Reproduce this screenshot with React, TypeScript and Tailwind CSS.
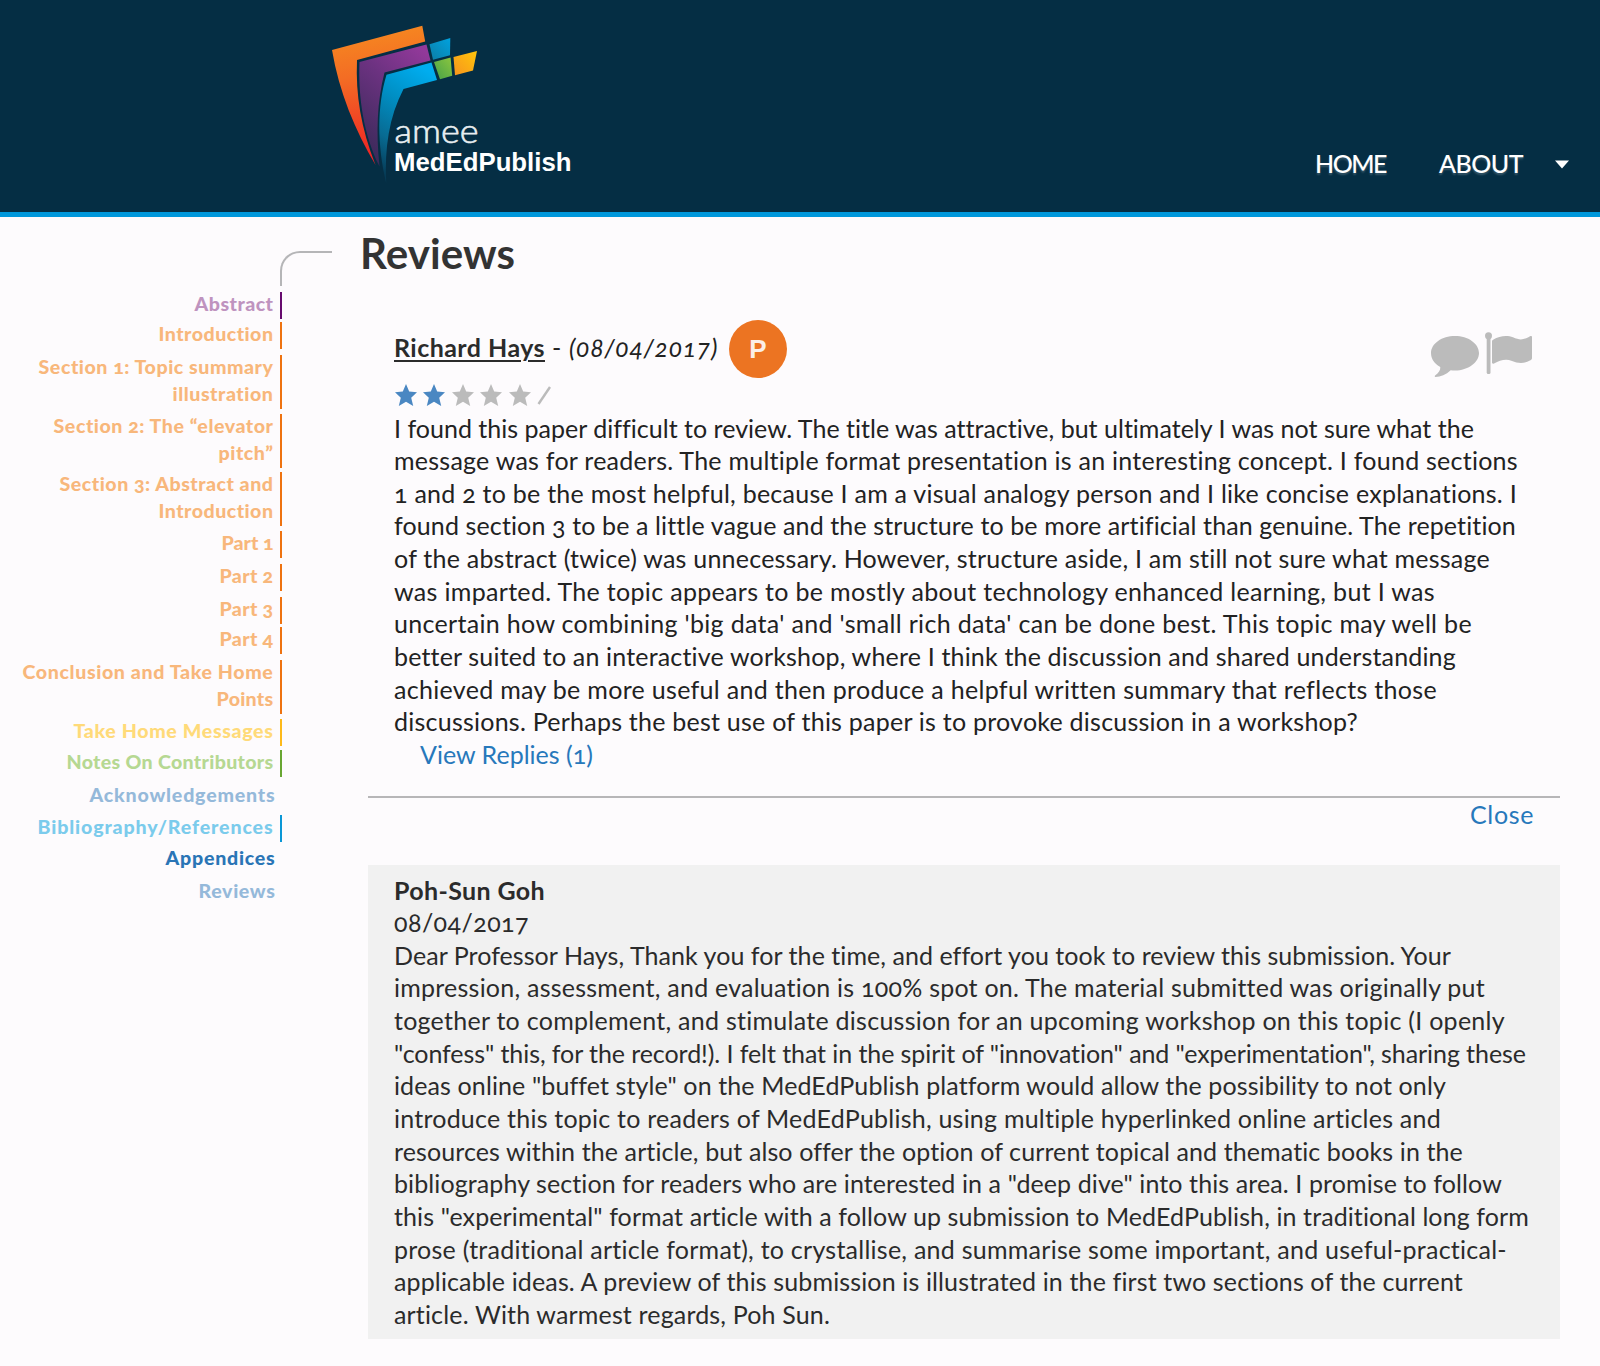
import { useLayoutEffect, useRef, useState } from 'react';

interface Line {
  text: string;
  width: number;
}

interface NavItem {
  lines: Line[];
  text: string;
  bar?: string;
  gap: string;
}

const orange = { text: 'text-[#f8b77b]', bar: 'border-[#ee7210]' };

const navItems: NavItem[] = [
  { lines: [{ text: 'Abstract', width: 79 }], text: 'text-[#bf93bf]', bar: 'border-[#660a6e]', gap: 'mt-0' },
  { lines: [{ text: 'Introduction', width: 115 }], ...orange, gap: 'mt-[3px]' },
  { lines: [{ text: 'Section 1: Topic summary', width: 235 }, { text: 'illustration', width: 101 }], ...orange, gap: 'mt-[6px]' },
  { lines: [{ text: 'Section 2: The “elevator', width: 220 }, { text: 'pitch”', width: 55 }], ...orange, gap: 'mt-[5px]' },
  { lines: [{ text: 'Section 3: Abstract and', width: 214 }, { text: 'Introduction', width: 115 }], ...orange, gap: 'mt-[4px]' },
  { lines: [{ text: 'Part 1', width: 52 }], ...orange, gap: 'mt-[5px]' },
  { lines: [{ text: 'Part 2', width: 54 }], ...orange, gap: 'mt-[6px]' },
  { lines: [{ text: 'Part 3', width: 54 }], ...orange, gap: 'mt-[6px]' },
  { lines: [{ text: 'Part 4', width: 54 }], ...orange, gap: 'mt-[3px]' },
  { lines: [{ text: 'Conclusion and Take Home', width: 251 }, { text: 'Points', width: 57 }], ...orange, gap: 'mt-[6px]' },
  { lines: [{ text: 'Take Home Messages', width: 200 }], text: 'text-[#ffda79]', bar: 'border-[#fdb91a]', gap: 'mt-[5px]' },
  { lines: [{ text: 'Notes On Contributors', width: 207 }], text: 'text-[#b6d892]', bar: 'border-[#68a632]', gap: 'mt-[4px]' },
  { lines: [{ text: 'Acknowledgements', width: 186 }], text: 'text-[#95b9da]', gap: 'mt-[6px]' },
  { lines: [{ text: 'Bibliography/References', width: 236 }], text: 'text-[#7bcbec]', bar: 'border-[#0a97d6]', gap: 'mt-[5px]' },
  { lines: [{ text: 'Appendices', width: 110 }], text: 'text-[#2a75b6]', gap: 'mt-[4px]' },
  { lines: [{ text: 'Reviews', width: 77 }], text: 'text-[#95b9da]', gap: 'mt-[6px]' },
];

const reviewLines: Line[] = [
  { text: 'I found this paper difficult to review. The title was attractive, but ultimately I was not sure what the', width: 1080 },
  { text: 'message was for readers. The multiple format presentation is an interesting concept. I found sections', width: 1124 },
  { text: '1 and 2 to be the most helpful, because I am a visual analogy person and I like concise explanations. I', width: 1123 },
  { text: 'found section 3 to be a little vague and the structure to be more artificial than genuine. The repetition', width: 1122 },
  { text: 'of the abstract (twice) was unnecessary. However, structure aside, I am still not sure what message', width: 1096 },
  { text: 'was imparted. The topic appears to be mostly about technology enhanced learning, but I was', width: 1041 },
  { text: "uncertain how combining 'big data' and 'small rich data' can be done best. This topic may well be", width: 1078 },
  { text: 'better suited to an interactive workshop, where I think the discussion and shared understanding', width: 1062 },
  { text: 'achieved may be more useful and then produce a helpful written summary that reflects those', width: 1043 },
  { text: 'discussions. Perhaps the best use of this paper is to provoke discussion in a workshop?', width: 964 },
];

const replyLines: Line[] = [
  { text: 'Dear Professor Hays, Thank you for the time, and effort you took to review this submission. Your', width: 1057 },
  { text: 'impression, assessment, and evaluation is 100% spot on. The material submitted was originally put', width: 1091 },
  { text: 'together to complement, and stimulate discussion for an upcoming workshop on this topic (I openly', width: 1111 },
  { text: '"confess" this, for the record!). I felt that in the spirit of "innovation" and "experimentation", sharing these', width: 1132 },
  { text: 'ideas online "buffet style" on the MedEdPublish platform would allow the possibility to not only', width: 1052 },
  { text: 'introduce this topic to readers of MedEdPublish, using multiple hyperlinked online articles and', width: 1047 },
  { text: 'resources within the article, but also offer the option of current topical and thematic books in the', width: 1069 },
  { text: 'bibliography section for readers who are interested in a "deep dive" into this area. I promise to follow', width: 1108 },
  { text: 'this "experimental" format article with a follow up submission to MedEdPublish, in traditional long form', width: 1135 },
  { text: 'prose (traditional article format), to crystallise, and summarise some important, and useful-practical-', width: 1113 },
  { text: 'applicable ideas. A preview of this submission is illustrated in the first two sections of the current', width: 1069 },
  { text: 'article. With warmest regards, Poh Sun.', width: 436 },
];

// Tracks a run of text out (or in) so that it fills the given measure
function Fit({ text, width, className = '' }: Line & { className?: string }) {
  const ref = useRef<HTMLSpanElement>(null);
  const [spacing, setSpacing] = useState(0);

  useLayoutEffect(() => {
    if (!ref.current) return;
    ref.current.style.letterSpacing = '0.001px';
    const natural = ref.current.getBoundingClientRect().width;
    setSpacing((width - natural) / text.length);
  }, [text, width]);

  return (
    <span ref={ref} className={`inline-block whitespace-nowrap ${className}`} style={{ letterSpacing: `${spacing}px` }}>
      {text}
    </span>
  );
}

function Paragraph({ lines }: { lines: Line[] }) {
  return (
    <p>
      {lines.map((line) => (
        <span key={line.text} className="block">
          <Fit {...line} />
        </span>
      ))}
    </p>
  );
}

function Logo() {
  return (
    <svg width="280" height="170" viewBox="310 20 280 170" className="block">
      <defs>
        <linearGradient id="orange" x1="0.4" y1="0" x2="0.5" y2="1">
          <stop offset="0" stopColor="#f68a20" />
          <stop offset="0.35" stopColor="#f36c24" />
          <stop offset="1" stopColor="#ee1c25" />
        </linearGradient>
        <linearGradient id="purple" x1="0.8" y1="0" x2="0.3" y2="1">
          <stop offset="0" stopColor="#92399a" />
          <stop offset="0.4" stopColor="#6b3280" />
          <stop offset="1" stopColor="#3a2a59" />
        </linearGradient>
        <linearGradient id="blue" x1="0.6" y1="0" x2="0.3" y2="1">
          <stop offset="0" stopColor="#00adef" />
          <stop offset="0.35" stopColor="#008fc4" />
          <stop offset="0.7" stopColor="#086b93" />
          <stop offset="1" stopColor="#063a55" />
        </linearGradient>
        <linearGradient id="teal" x1="1" y1="0" x2="0" y2="1">
          <stop offset="0" stopColor="#00a2df" />
          <stop offset="1" stopColor="#0c7da6" />
        </linearGradient>
        <linearGradient id="green" x1="1" y1="0" x2="0" y2="1">
          <stop offset="0" stopColor="#8cc63f" />
          <stop offset="1" stopColor="#45a148" />
        </linearGradient>
        <linearGradient id="yellow" x1="1" y1="0" x2="0" y2="1">
          <stop offset="0" stopColor="#ffc60b" />
          <stop offset="1" stopColor="#f7941e" />
        </linearGradient>
      </defs>
      <path d="M332 50L422.3 25.8L425.2 41.5L357 60C355.5 95 361 128 375.5 165C355 130 339 92 332 50Z" fill="url(#orange)" />
      <path d="M359.5 62L426.5 44.5L430.5 60.5L384.5 72.5C377 102 376 132 379.5 166.500C364 136 358 98 359.500 62Z" fill="url(#purple)" />
      <path d="M386.500 74.800L431.500 62.500L437 80L403.500 89C389 117 384.500 148 386.200 183C377 145 377 106 386.500 74.800Z" fill="url(#blue)" />
      <path d="M429.500 44.200L450.300 38L450 55.200L433 59.800Z" fill="url(#teal)" />
      <path d="M434 62L450.600 57.500L452.200 75.700L440 79.300Z" fill="url(#green)" />
      <path d="M453.500 57L477 51L473 70.500L455 75.300Z" fill="url(#yellow)" />
      <text x="394.500" y="143" textLength="84" lengthAdjust="spacingAndGlyphs" fill="#e9eef1" stroke="#e9eef1" strokeWidth="0.600" className="font-['Lato',sans-serif] text-[33px] font-light">amee</text>
      <text x="394" y="170.700" textLength="177.500" lengthAdjust="spacingAndGlyphs" fill="#ffffff" className="font-['Liberation_Sans',Arial,sans-serif] text-[26px] font-bold">MedEdPublish</text>
    </svg>
  );
}

function Star({ filled }: { filled: boolean }) {
  return (
    <svg width="22" height="22" viewBox="0 0 22 22" className={filled ? 'text-[#4a87c2]' : 'text-[#bbbbbb]'}>
      <path d="M11 0L14.200 7.500L22 8.300L16.200 13.700L18.200 22L11 17.800L3.800 22L5.800 13.700L0 8.300L7.800 7.500Z" fill="currentColor" />
    </svg>
  );
}

function Header() {
  return (
    <header className="flex h-[217px] items-start justify-between border-b-[5px] border-[#0098dc] bg-[#052e44] pl-[310px] pr-[31px]">
      <div className="pt-5">
        <Logo />
      </div>
      <nav className="flex items-center pt-[146px] text-[25px] leading-[34px] font-medium text-white [text-shadow:0_2px_2px_rgba(255,255,255,0.2)]">
        <a className="w-[124px]">
          <Fit text="HOME" width={71} />
        </a>
        <a className="w-[116px]">
          <Fit text="ABOUT" width={84} />
        </a>
        <svg width="14" height="9" viewBox="0 0 14 9" className="mt-[2px] block">
          <path d="M0 0.500H14L7 8.500Z" fill="#ffffff" />
        </svg>
      </nav>
    </header>
  );
}

function Sidebar() {
  return (
    <aside className="w-[332px] shrink-0 pt-[34px]">
      <div className="ml-[280px] h-[35px] rounded-tl-[20px] border-t-2 border-l-2 border-[#b5b5b7]" />
      <ul className="w-[282px] pt-[6px] text-[19.600px] leading-[27px] font-black">
        {navItems.map((item, i) => (
          <li key={i} className={`flex flex-col items-end ${item.text} ${item.gap} ${item.bar ? `border-r-2 pr-[6.500px] ${item.bar}` : 'pr-[6.500px]'}`}>
            {item.lines.map((line) => (
              <Fit key={line.text} {...line} className="-mt-[2px] mb-[2px]" />
            ))}
          </li>
        ))}
      </ul>
    </aside>
  );
}

function Review() {
  return (
    <article className="px-[26px]">
      <div className="flex h-[58px] items-center">
        <Fit text="Richard Hays" width={151} className="-mt-[3px] font-bold underline decoration-2 underline-offset-[3px] text-[#2b2b2b]" />
        <span className="-mt-[3px] ml-[7px] w-[17px]">-</span>
        <Fit text="(08/04/2017)" width={149} className="-mt-[3px] italic" />
        <span className="ml-[11px] flex size-[58px] items-center justify-center rounded-full bg-[#ec7422] font-['Liberation_Sans',Arial,sans-serif] text-[26px] font-bold text-[#fbeee6]">
          P
        </span>
        <svg width="104" height="46" viewBox="0 0 104 46" className="ml-auto mt-[11px] text-[#bbbbbb]" fill="currentColor">
          <path d="M25 4C38 4 49 11.500 49 21S38 38.500 25 38.500C23.500 38.500 22 38.400 20.700 38.200C16 42.500 10.500 45 5.500 45C4.500 45 4.500 43.800 5.400 43.200C8.500 41 10.500 38.500 10.300 35C4.500 32 1 26.800 1 21C1 11.500 12 4 25 4Z" />
          <circle cx="58.500" cy="3.800" r="3.500" />
          <rect x="56.700" y="4" width="3.800" height="38" rx="1.500" />
          <path d="M62 9.500C62 8.500 62.500 8 63.500 7.500C69 4 77 2.800 83 5.300C90 8.500 93.500 8 100 4.200C101.200 3.500 102 4 102 5.200V26C102 27.200 101.500 27.700 100.500 28.300C94 32 88 31.500 82 29C75.500 26.500 70 28.500 64 31.500C62.700 32 62 31.500 62 30.500Z" />
        </svg>
      </div>
      <div className="mt-1 mb-[3px] ml-[0.500px] flex h-[26.500px] items-center gap-[6.500px]">
        {[1, 2, 3, 4, 5].map((n) => (
          <Star key={n} filled={n <= 2} />
        ))}
        <svg width="14" height="19" viewBox="0 0 14 19">
          <path d="M1.500 18L13 1" stroke="#bbbbbb" strokeWidth="2.400" />
        </svg>
      </div>
      <Paragraph lines={reviewLines} />
      <a className="ml-[26px] block text-[#2778bb]">
        <Fit text="View Replies (1)" width={173} />
      </a>
    </article>
  );
}

export default function App() {
  return (
    <div className="min-h-[1366px] w-[1600px] overflow-hidden bg-[#fdfbfd] font-['Lato',sans-serif] text-[#222222] oldstyle-nums">
      <Header />
      <div className="flex">
        <Sidebar />
        <main className="w-[1228px] pl-9 text-[25px] leading-[32.640px]">
          <h1 className="-ml-[8px] pt-[10px] text-[42px] leading-[52px] font-bold text-[#333333]">
            <Fit text="Reviews" width={155} />
          </h1>
          <div className="pt-[41px]">
            <Review />
          </div>
          <hr className="mt-[25.500px] border-t-2 border-[#b7b6b8]" />
          <div className="h-[67px] pr-[26px] text-right text-[#2778bb]">
            <Fit text="Close" width={64} />
          </div>
          <section className="h-[474px] bg-[#f1f1f1] px-[26px] pt-[8.500px] text-[#2b2b2b]">
            <h2 className="font-bold">
              <Fit text="Poh-Sun Goh" width={151} />
            </h2>
            <div>
              <Fit text="08/04/2017" width={135} />
            </div>
            <Paragraph lines={replyLines} />
          </section>
        </main>
      </div>
    </div>
  );
}
